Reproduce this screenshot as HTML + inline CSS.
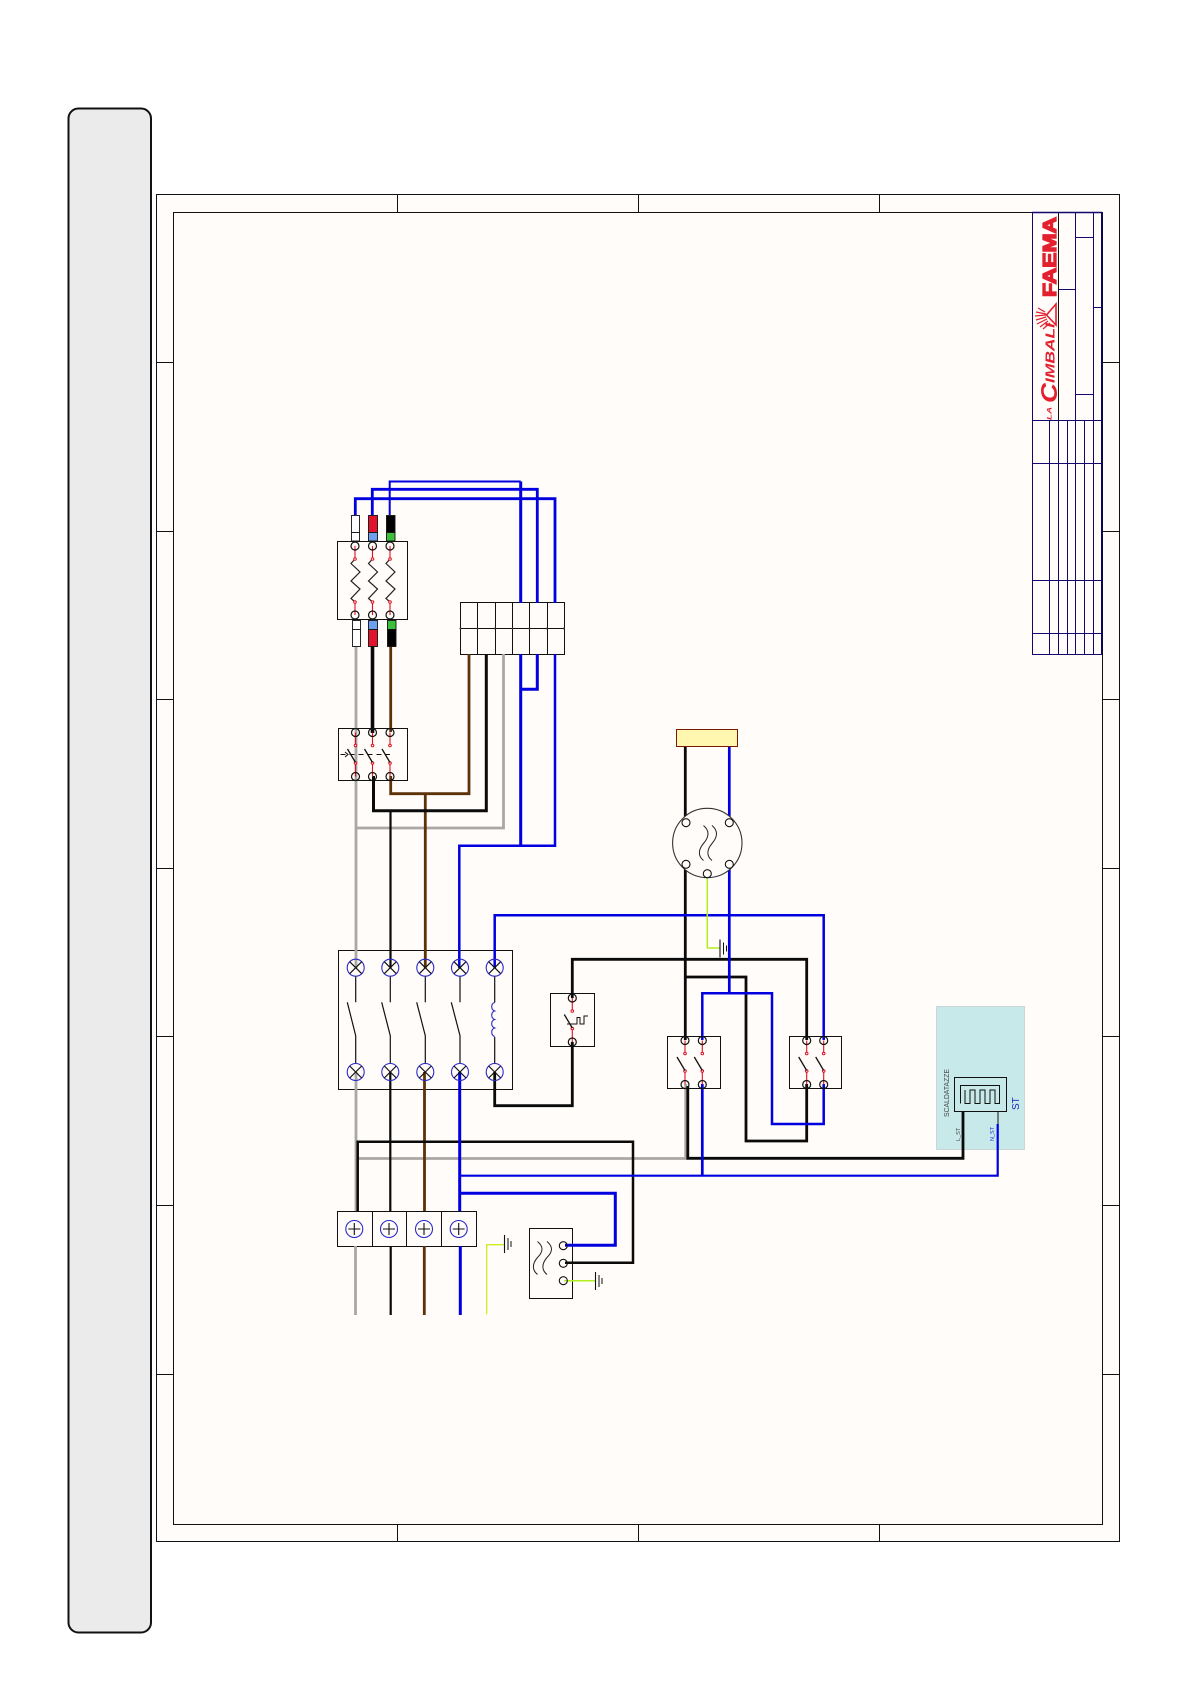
<!DOCTYPE html>
<html><head><meta charset="utf-8"><title>Schema</title>
<style>html,body{margin:0;padding:0;background:#fff}svg{display:block}text{font-family:"Liberation Sans",sans-serif}</style></head>
<body>
<svg xmlns="http://www.w3.org/2000/svg" width="1191" height="1684" viewBox="0 0 1191 1684" fill="none" stroke-linejoin="miter">
<defs>
<g id="sw"><path d="M0 -22V-9M0 9V22" stroke="#e01020" stroke-width="1.100"/><circle cy="-9" r="1.300" stroke="#e01020" fill="#fff"/><circle cy="8.500" r="1.300" stroke="#e01020" fill="#fff"/><path d="M-8 -5.500L0 8" stroke="#111" stroke-width="1.300"/><circle cy="-22" r="4" stroke="#111" stroke-width="1.200"/><circle cy="22" r="4" stroke="#111" stroke-width="1.200"/></g>
<g id="fuse"><path d="M0 0V13M0 56V69" stroke="#e01020" stroke-width="1.100"/><path d="M0 13L-4 17.500L5 26L-4 35L5 43L-4 52.500L0 56" stroke="#222" stroke-width="1.200"/><circle cy="13" r="1.300" stroke="#e01020" fill="#fff"/><circle cy="56" r="1.300" stroke="#e01020" fill="#fff"/><circle r="4" stroke="#111" stroke-width="1.200"/><circle cy="69" r="4" stroke="#111" stroke-width="1.200"/></g>
<g id="x"><circle r="8.500" stroke="#2a2ac8" stroke-width="1.100" fill="none"/><path d="M-6 -6L6 6M6 -6L-6 6" stroke="#111" stroke-width="1.200"/></g>
<g id="p"><circle r="8.500" stroke="#2a2ac8" stroke-width="1.100"/><path d="M-6 0H6M0 -6V6" stroke="#111" stroke-width="1.100"/></g>
<g id="gnd"><path d="M0 -9V9" stroke="#111" stroke-width="1.100"/><path d="M3.500 -6V6" stroke="#111"/><path d="M6.500 -3V3" stroke="#111"/></g>
</defs>
<rect x="68.500" y="108.500" width="82.500" height="1524" rx="10" fill="#ebebeb" stroke="#111" stroke-width="2"/>
<rect x="156.500" y="194.500" width="963" height="1347" fill="#fffcf9" stroke="#111" stroke-width="1"/>
<rect x="173.500" y="212.500" width="929" height="1312" fill="#fffcf9" stroke="#111" stroke-width="1"/>
<path d="M397.500 195V212M638.500 195V212M879.500 195V212M397.500 1525V1541M638.500 1525V1541M879.500 1525V1541M157 362.500H173M157 531.500H173M157 699.500H173M157 868.500H173M157 1036.500H173M157 1205.500H173M157 1374.500H173M1103 362.500H1119M1103 531.500H1119M1103 699.500H1119M1103 868.500H1119M1103 1036.500H1119M1103 1205.500H1119M1103 1374.500H1119" stroke="#111" stroke-width="1"/>
<!-- title block -->
<g stroke="#14086e" stroke-width="1">
<rect x="1032.500" y="212.500" width="69" height="442"/>
<path d="M1032.500 420.500H1101.500M1032.500 463.500H1101.500M1032.500 580.500H1101.500M1032.500 633.500H1101.500"/>
<path d="M1049.500 420.500V654M1058.500 420.500V654M1067.500 420.500V654M1075.500 212.500V654M1084.500 420.500V654M1093.500 212.500V654"/>
<path d="M1058.500 289.500H1075.500M1075.500 237.500H1093.500M1075.500 394.500H1093.500M1093.500 307.500H1101.500"/>
</g>
<path d="M1058.500 212.500V420.500" stroke="#111" stroke-width="1"/>
<path d="M1102 212V654" stroke="#0a0650" stroke-width="1.500"/>
<path d="M1032 212.500H1102" stroke="#14086e" stroke-width="1.500"/>
<!-- logo -->
<g fill="#e2202e">
<text transform="translate(1056,297) rotate(-90)" font-size="18" font-weight="bold" textLength="80" lengthAdjust="spacingAndGlyphs" stroke="#e2202e" stroke-width="1.300">FAEMA</text>
<text transform="translate(1054.500,383) rotate(-90)" font-size="13" font-weight="bold" font-style="italic" textLength="60" lengthAdjust="spacingAndGlyphs">IMBALI</text>
<text transform="translate(1057,403) rotate(-90)" font-size="23" font-weight="bold" font-style="italic" textLength="20" lengthAdjust="spacingAndGlyphs">C</text>
<text transform="translate(1051.500,420) rotate(-90)" font-size="6.500" font-weight="bold" font-style="italic" textLength="13" lengthAdjust="spacingAndGlyphs">LA</text>
</g>
<path d="M1056 304L1046.500 315L1056 325Z" stroke="#e2202e" stroke-width="1.600"/>
<path d="M1046 314L1036 312M1046 315L1035 316M1046 317L1036 320M1047 319L1037 324M1048 321L1040 327M1050 323L1043 329M1045 312L1038 308" stroke="#e2202e" stroke-width="1.200"/>
<!-- heater panel -->
<rect x="936.500" y="1006.500" width="88" height="143" fill="#c7e9e9" stroke="#c4cfcf" stroke-width=".8"/>
<rect x="954.500" y="1077.500" width="52" height="34" fill="#c7e9e9" stroke="#111" stroke-width="1"/>
<path d="M960.500 1103.500V1085.500H999.500V1103.500H995V1090H990V1103.500H985V1090H980V1103.500H975V1090H970V1103.500H965V1090" stroke="#111" stroke-width="1"/>
<text transform="translate(949,1117) rotate(-90)" font-size="7.500" fill="#444" textLength="48" lengthAdjust="spacingAndGlyphs">SCALDATAZZE</text>
<text transform="translate(960,1141) rotate(-90)" font-size="5.500" fill="#444">L_ST</text>
<text transform="translate(994,1141) rotate(-90)" font-size="5.500" fill="#2222dd">N_ST</text>
<text transform="translate(1019,1110) rotate(-90)" font-size="10" fill="#2222bb">ST</text>
<path d="M998 1111V1124" stroke="#111" stroke-width="1"/>
<!-- boxes -->
<g stroke="#111" stroke-width="1" fill="#fffcf9">
<rect x="337.500" y="541.500" width="70" height="78"/>
<rect x="338.500" y="728.500" width="69" height="52"/>
<rect x="338.500" y="950.500" width="174" height="139"/>
<rect x="550.500" y="993.500" width="44" height="53"/>
<rect x="667.500" y="1036.500" width="53" height="52"/>
<rect x="789.500" y="1036.500" width="52" height="52"/>
<rect x="337.500" y="1211.500" width="139" height="35"/>
<rect x="529.500" y="1228.500" width="43" height="70"/>
<rect x="460.500" y="602.500" width="104" height="52"/>
</g>
<path d="M460.500 628.500H564.500M477.500 602.500V654M495.500 602.500V654M512.500 602.500V654M529.500 602.500V654M547.500 602.500V654M372.500 1211.500V1246M406.500 1211.500V1246M441.500 1211.500V1246" stroke="#111" stroke-width="1"/>
<g fill="#333"><circle cx="460.500" cy="628.500" r="1"/><circle cx="477.500" cy="628.500" r="1"/><circle cx="495" cy="628.500" r="1"/><circle cx="512.500" cy="628.500" r="1"/><circle cx="529.500" cy="628.500" r="1"/><circle cx="547" cy="628.500" r="1"/><circle cx="564" cy="628.500" r="1"/></g>
<!-- wires gray -->
<g stroke="#aaa8a4" stroke-width="2.800">
<path d="M356 646V968M356 1072V1211M355.500 1246V1315M503.500 654V828H356M358 1158.500H685.700V1084"/>
</g>
<!-- brown -->
<g stroke="#5c3208" stroke-width="2.800">
<path d="M390.700 646V732M390.700 776V793.700H469V654M425.300 793.700V968M424.500 1072V1211M424.300 1246V1315"/>
</g>
<!-- black -->
<g stroke="#0a0a0a">
<path d="M372.500 646V733" stroke-width="3.600"/>
<path d="M373.500 776V810.700H486.300V654" stroke-width="3"/>
<path d="M390.500 810.700V968M390.300 1072V1211M390.700 1246V1315" stroke-width="2.200"/>
<path d="M494.700 1072V1105.700H572.300V1042M572.300 998V959.300H806.700V1040" stroke-width="2.800"/>
<path d="M806.700 1084V1141H746V977H685.300" stroke-width="2.800"/>
<path d="M685.300 746V818M685.300 868V1040" stroke-width="2.800"/>
<path d="M687.800 1086V1158.300H963V1111" stroke-width="2.800"/>
<path d="M357.700 1212V1141.700H633V1262.700H565" stroke-width="2.500"/>
</g>
<!-- blue -->
<g stroke="#0000e0">
<path d="M389.700 515V481.500H520.700" stroke-width="2"/>
<path d="M520.700 481.500V603" stroke-width="3"/>
<path d="M372.300 515V489.300H537.300V603" stroke-width="2.800"/>
<path d="M355.300 515V498.700H555V603" stroke-width="2.800"/>
<path d="M520.700 654V845.700M537.300 654V689.300H520.700" stroke-width="3"/>
<path d="M555 654V845.700H459.300V968" stroke-width="2.500"/>
<path d="M459.700 1072V1211M460.300 1246V1315" stroke-width="3"/>
<path d="M494.700 968V915.300H823.700V1040M823.700 1084V1124H772V993.300H702.300V1040" stroke-width="2.500"/>
<path d="M729.300 746V818M729.300 868V993.300" stroke-width="2.700"/>
<path d="M702.300 1084V1175.700" stroke-width="2.700"/>
<path d="M459.700 1175.700H997.700V1124" stroke-width="2.200"/>
<path d="M460 1193.300H615.300V1245.300H565" stroke-width="3"/>
</g>
<!-- green -->
<path d="M707.300 878V948H720" stroke="#b0f020" stroke-width="1.500"/>
<path d="M486.700 1314.300V1244.700H504" stroke="#c8f020" stroke-width="1.300"/>
<path d="M564 1280.700H595" stroke="#b0f020" stroke-width="1.500"/>
<use href="#gnd" x="720" y="948.500"/><use href="#gnd" x="504.500" y="1244"/><use href="#gnd" x="595.500" y="1281"/>
<!-- fuse sleeves -->
<g stroke="#111" stroke-width=".9">
<rect x="351.500" y="515.500" width="8" height="17" fill="#fff"/><rect x="351.500" y="532.500" width="8" height="8.500" fill="#fff"/>
<rect x="368.500" y="515.500" width="9" height="17" fill="#e0142c"/><rect x="368.500" y="532.500" width="9" height="8.500" fill="#6fa0f0"/>
<rect x="386.500" y="515.500" width="8.500" height="17" fill="#000"/><rect x="386.500" y="532.500" width="8.500" height="8.500" fill="#3cc03c"/>
<rect x="352.500" y="620.500" width="8" height="9" fill="#fff"/><rect x="352.500" y="629.500" width="8" height="17" fill="#fff"/>
<rect x="368.500" y="620.500" width="9" height="9" fill="#6fa0f0"/><rect x="368.500" y="629.500" width="9" height="17" fill="#e0142c"/>
<rect x="387.500" y="620.500" width="8.500" height="9" fill="#3cc03c"/><rect x="387.500" y="629.500" width="8.500" height="17" fill="#000"/>
</g>
<!-- fuse elements -->
<use href="#fuse" x="355" y="546"/><use href="#fuse" x="372.500" y="546"/><use href="#fuse" x="390" y="546"/>
<!-- 3 pole -->
<use href="#sw" x="355.500" y="754.500"/><use href="#sw" x="372.500" y="754.500"/><use href="#sw" x="390" y="754.500"/>
<path d="M340.500 754.500H390" stroke="#111" stroke-width="1" stroke-dasharray="5 4"/>
<path d="M345 752L348 754.500L345 757" stroke="#111" stroke-width="1"/>
<!-- contactor -->
<g stroke="#111" stroke-width="1.200">
<path d="M355.700 976V1002.300M347.300 1002.300L355.700 1035.700V1064"/>
<path d="M390.300 976V1002.300M381.700 1002.300L390.300 1035.700V1064"/>
<path d="M425.300 976V1002.300M416.700 1002.300L425.300 1035.700V1064"/>
<path d="M460 976V1002.300M451.300 1002.300L460 1035.700V1064"/>
<path d="M494.700 976V1002.500M494.700 1037V1064"/>
</g>
<path d="M494.700 1002.500c-4 1 -4 7 0 8.500c-4 1 -4 7 0 8.500c-4 1 -4 7 0 8.500c-4 1 -4 7 0 8.500" stroke="#2a2ac8" stroke-width="1.100"/>
<use href="#x" x="355.700" y="967.700"/><use href="#x" x="390.300" y="967.700"/><use href="#x" x="425.300" y="967.700"/><use href="#x" x="460" y="967.700"/><use href="#x" x="494.700" y="967.700"/>
<use href="#x" x="355.700" y="1072"/><use href="#x" x="390.300" y="1072"/><use href="#x" x="425.300" y="1072"/><use href="#x" x="460" y="1072"/><use href="#x" x="494.700" y="1072"/>
<!-- thermal switch -->
<use href="#sw" x="572.300" y="1020"/>
<path d="M567 1024H577V1017.500H580V1024H584V1016H588" stroke="#111" stroke-width="1"/>
<!-- motor -->
<circle cx="707.300" cy="843" r="34.700" fill="#fffcf9" stroke="#333" stroke-width="1.100"/>
<g fill="#fffcf9" stroke="#111" stroke-width="1.100">
<circle cx="686" cy="822.700" r="4"/><circle cx="729.300" cy="822.700" r="4"/><circle cx="686" cy="864.300" r="4"/><circle cx="729.300" cy="864.300" r="4"/><circle cx="707.300" cy="873.700" r="4"/>
</g>
<path d="M703.500 825.500c6 5 6 11 0 18c-6 7 -5 13 0 17M712 825.500c6 5 6 11 0 18c-6 7 -5 13 0 17" stroke="#222" stroke-width="1"/>
<rect x="676.500" y="729.500" width="61" height="17" fill="#fff6b0" stroke="#7a1a00" stroke-width="1"/>
<!-- two switch blocks -->
<use href="#sw" x="685" y="1062.500"/><use href="#sw" x="702.300" y="1062.500"/>
<use href="#sw" x="806.700" y="1062.500"/><use href="#sw" x="823.700" y="1062.500"/>
<!-- lower terminal -->
<use href="#p" x="354.300" y="1229"/><use href="#p" x="389" y="1229"/><use href="#p" x="424" y="1229"/><use href="#p" x="458.700" y="1229"/>
<!-- filter box -->
<g stroke="#111" stroke-width="1.100"><circle cx="563.300" cy="1245.700" r="4"/><circle cx="563.300" cy="1263.300" r="4"/><circle cx="563.300" cy="1280.700" r="4"/></g>
<path d="M537.500 1241.500c6 5 6 10 0 16c-6 7 -5 13 0 17M547 1241.500c6 5 6 10 0 16c-6 7 -5 13 0 17" stroke="#222" stroke-width="1"/>
</svg>
</body></html>
